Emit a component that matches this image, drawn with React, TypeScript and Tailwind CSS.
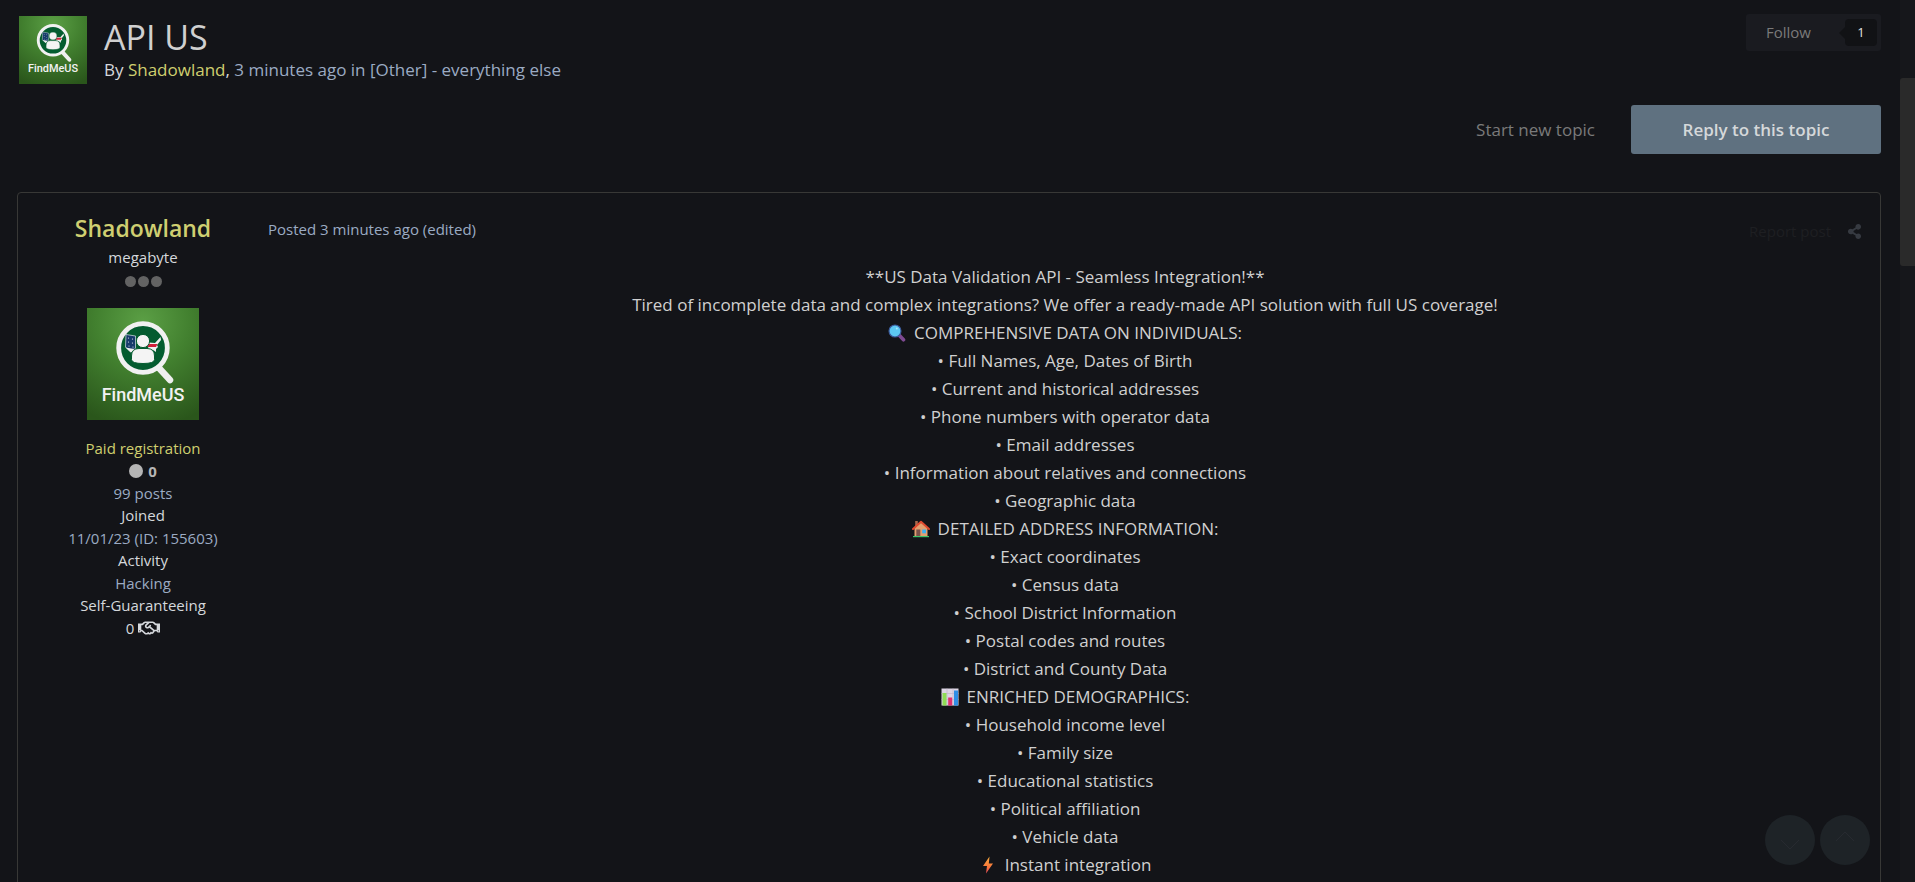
import { FaRegHandshake, FaShareAlt } from "react-icons/fa";

const fontStack = "font-['Open_Sans','Noto_Sans',sans-serif]";

function Avatar({ id, className }: { id: string; className: string }) {
  return (
    <svg viewBox="0 0 112 112" className={className} role="img" aria-label="FindMeUS">
      <defs>
        <radialGradient id={id} cx="0.5" cy="0.12" r="0.95">
          <stop offset="0" stopColor="#5b9f45" />
          <stop offset="0.45" stopColor="#42802f" />
          <stop offset="1" stopColor="#2a561b" />
        </radialGradient>
      </defs>
      <rect width="112" height="112" fill={`url(#${id})`} />
      <path d="M72 60 83 72" stroke="#efefef" strokeWidth="6.5" strokeLinecap="round" />
      <circle cx="56" cy="40" r="24.3" fill="#045c30" stroke="#f1f1f1" strokeWidth="4.8" />
      {/* US map halves */}
      <path d="M39 26.500 48.500 28V40.500L43.500 44 38.500 39Z" fill="#163a6b" stroke="#dfe6ea" strokeWidth="0.7" />
      <path d="M38.500 39.500 44 40.500 48 41 44 44.500Z" fill="#f1f1f1" />
      <g fill="#e6ecf3">
        <circle cx="41.500" cy="30" r="0.6" />
        <circle cx="45.500" cy="31" r="0.6" />
        <circle cx="41.500" cy="34" r="0.6" />
        <circle cx="45.500" cy="35" r="0.6" />
        <circle cx="42" cy="38" r="0.6" />
        <circle cx="46" cy="39" r="0.6" />
      </g>
      <path d="M62 34.500 68 35 73.500 29 74 32 70 37 71 39 69 41V44L66 42 61 41Z" fill="#f1f1f1" />
      <path d="M61.500 36H70.500L69 39H60.500Z" fill="#d0203a" />
      <circle cx="56" cy="33" r="6.600" fill="#f4f4f4" stroke="#045c30" strokeWidth="1" />
      <path
        d="M44.500 51.500V48Q44.500 40.500 52 40.500H60Q67.500 40.500 67.500 48V51.500Q67.500 55.500 56 55.500T44.500 51.500Z"
        fill="#f4f4f4"
        stroke="#045c30"
        strokeWidth="1"
      />
      <text x="56" y="93" textAnchor="middle" fontSize="18" fontWeight="500" fill="#f2f2f2" className="font-[Roboto,sans-serif]">
        FindMeUS
      </text>
    </svg>
  );
}

function MagnifierIcon() {
  return (
    <svg viewBox="0 0 18 18" className="size-[18px]" aria-hidden="true">
      <path d="M11 11 15.500 15.800" stroke="#7e4a92" strokeWidth="3.6" strokeLinecap="round" />
      <circle cx="7" cy="7" r="6" fill="#5cc8f2" stroke="#3d5a9c" strokeWidth="1.1" />
      <circle cx="8.800" cy="4.500" r="1" fill="#a8e6fb" />
    </svg>
  );
}

function HouseIcon() {
  return (
    <svg viewBox="0 0 18 18" className="size-[18px]" aria-hidden="true">
      <rect x="3.200" y="1" width="2.600" height="6" fill="#a8694c" />
      <path d="M2.500 8 9 2.500 15.500 8V16H2.500Z" fill="#e2a070" />
      <path d="M1 9 9 1.800 17 9" stroke="#e04a2f" strokeWidth="2" strokeLinecap="round" strokeLinejoin="round" fill="none" />
      <rect x="4.300" y="9.500" width="4" height="6.500" fill="#79504a" />
      <rect x="10.200" y="9.500" width="3.800" height="3.800" fill="#3fb0f0" />
      <rect x="1" y="16" width="16" height="1.200" fill="#3cc268" />
    </svg>
  );
}

function ChartIcon() {
  return (
    <svg viewBox="0 0 18 18" className="size-[18px]" aria-hidden="true">
      <rect x="0.500" y="0.500" width="17" height="17" fill="#ddd5e4" />
      <path d="M0.500 5.500H17.500M0.500 11.500H17.500M6 0.500V17.500M12 0.500V17.500" stroke="#bdb2c8" strokeWidth="0.6" />
      <rect x="1.500" y="5" width="4" height="12.500" fill="#8fdc55" />
      <rect x="7.200" y="9.500" width="4" height="8" fill="#e0306e" />
      <rect x="13" y="2.500" width="4" height="15" fill="#2f8ee5" />
    </svg>
  );
}

function BoltIcon() {
  return (
    <svg viewBox="0 0 18 18" className="size-[18px]" aria-hidden="true">
      <defs>
        <linearGradient id="bolt" x1="0" y1="0" x2="0" y2="1">
          <stop offset="0" stopColor="#fbb040" />
          <stop offset="0.6" stopColor="#f8763a" />
          <stop offset="1" stopColor="#ea4a5a" />
        </linearGradient>
      </defs>
      <path d="M10.500 0.500 4 10H8L7 17.500 14 7.500H9.800Z" fill="url(#bolt)" />
    </svg>
  );
}

const intro = [
  "**US Data Validation API - Seamless Integration!**",
  "Tired of incomplete data and complex integrations? We offer a ready-made API solution with full US coverage!",
];

const sections = [
  {
    icon: <MagnifierIcon />,
    title: "COMPREHENSIVE DATA ON INDIVIDUALS:",
    items: [
      "Full Names, Age, Dates of Birth",
      "Current and historical addresses",
      "Phone numbers with operator data",
      "Email addresses",
      "Information about relatives and connections",
      "Geographic data",
    ],
  },
  {
    icon: <HouseIcon />,
    title: "DETAILED ADDRESS INFORMATION:",
    items: [
      "Exact coordinates",
      "Census data",
      "School District Information",
      "Postal codes and routes",
      "District and County Data",
    ],
  },
  {
    icon: <ChartIcon />,
    title: "ENRICHED DEMOGRAPHICS:",
    items: [
      "Household income level",
      "Family size",
      "Educational statistics",
      "Political affiliation",
      "Vehicle data",
    ],
  },
  { icon: <BoltIcon />, title: "Instant integration", items: [] },
];

function TopicHeader() {
  return (
    <header className="flex items-start justify-between pt-[14px]">
      <div className="flex gap-[17px] pt-[2px] pl-[2px]">
        <a href="#profile" className="block">
          <Avatar id="avatar-small" className="size-[68px]" />
        </a>
        <div>
          <h1 className="text-[34px] leading-[42px] text-[#d0d0d0]">API US</h1>
          <p className="text-[17px] leading-[24px] text-[#9babc3]">
            <span className="text-[#d5d8dc]">By </span>
            <a href="#profile" className="text-[#cfcf6f]">Shadowland</a>
            <span className="text-[#d5d8dc]">, </span>
            3 minutes ago in{" "}
            <a href="#forum">[Other] - everything else</a>
          </p>
        </div>
      </div>
      <div className="flex h-[37px] items-center justify-between rounded-[3px] bg-[#1a1b20] pr-1 pl-5">
        <button type="button" className="pr-7 text-[15px] text-[#7a7a7a]">Follow</button>
        <div className="flex items-center">
          <span className="border-y-6 border-r-6 border-y-transparent border-r-[#111215]" />
          <a href="#followers" className="flex h-[27px] w-8 items-center justify-center rounded bg-[#111215] text-[13px] text-[#e2e2e2]">1</a>
        </div>
      </div>
    </header>
  );
}

function Author() {
  return (
    <aside className="w-[250px] shrink-0 pt-5 text-center text-[15px]">
      <h3 className="text-[23px] leading-[30px] font-semibold">
        <a href="#profile" className="text-[#cfcf71]">Shadowland</a>
      </h3>
      <p className="mt-[3px] leading-[22px] text-[#d5d8dc]">megabyte</p>
      <div className="mt-2 flex justify-center gap-[2px]">
        <span className="size-[11px] rounded-full bg-[#636363]" />
        <span className="size-[11px] rounded-full bg-[#636363]" />
        <span className="size-[11px] rounded-full bg-[#636363]" />
      </div>
      <a href="#profile" className="mt-[21px] mb-[17px] flex justify-center">
        <Avatar id="avatar-large" className="size-[112px]" />
      </a>
      <ul className="leading-[22px] text-[#9babc3]">
        <li className="text-[#cfcf6f]">Paid registration</li>
        <li className="flex h-[23px] items-center justify-center gap-[5px] font-bold text-[#b5b5b5]">
          <span className="size-[14px] rounded-full bg-[#b5b5b5]" />0
        </li>
        <li>99 posts</li>
        <li className="leading-[23px] text-[#d5d8dc]">Joined</li>
        <li>11/01/23 (ID: 155603)</li>
        <li className="leading-[23px] text-[#d5d8dc]">Activity</li>
        <li>Hacking</li>
        <li className="leading-[23px] text-[#d5d8dc]">Self-Guaranteeing</li>
        <li className="flex items-center justify-center gap-1 text-[#d5d8dc]">
          0 <FaRegHandshake className="size-[22px]" />
        </li>
      </ul>
    </aside>
  );
}

function PostBody() {
  return (
    <div className="mt-[18px] text-center text-[17px] leading-[28px] text-[#d0d0d0]">
      {intro.map((line) => (
        <p key={line}>{line}</p>
      ))}
      {sections.map((section) => (
        <section key={section.title}>
          <h4 className="flex items-center justify-center gap-2">
            {section.icon}
            {section.title}
          </h4>
          {section.items.map((item) => (
            <p key={item}>• {item}</p>
          ))}
        </section>
      ))}
    </div>
  );
}

export default function App() {
  return (
    <div className={`flex h-screen overflow-hidden bg-[#131418] ${fontStack}`}>
      <main className="min-w-0 flex-1 pr-[19px] pl-[17px]">
        <TopicHeader />

        {/* Topic actions */}
        <div className="mt-[21px] flex items-center justify-end gap-9">
          <a href="#new" className="text-[17px] text-[#7a7a7a]">Start new topic</a>
          <a
            href="#reply"
            className="flex h-[49px] w-[250px] items-center justify-center rounded-[3px] bg-[#5f7180] text-[17px] font-semibold text-[#d5d8da]"
          >
            Reply to this topic
          </a>
        </div>

        <article className="mt-[38px] flex rounded-[4px] border border-[#383836] pb-8">
          <Author />
          <div className="min-w-0 flex-1 pt-5 pr-[18px]">
            <div className="flex h-8 items-center justify-between text-[15px]">
              <span className="text-[#9babc3]">Posted 3 minutes ago (edited)</span>
              <div className="flex items-center gap-4 pt-1">
                <a href="#report" className="text-[#1e1f22]">Report post</a>
                <button type="button" aria-label="Share">
                  <FaShareAlt className="size-[15px] text-[#363a41]" />
                </button>
              </div>
            </div>
            <PostBody />
          </div>
        </article>
      </main>

      {/* Page scrollbar */}
      <div className="w-[15px] shrink-0 bg-[#16171b] pt-[78px]">
        <div className="h-[188px] rounded-l-[3px] bg-[#2a2a2a]" />
      </div>

      {/* Jump buttons */}
      <nav className="fixed right-[45px] bottom-[17px] flex gap-[5px]">
        <button type="button" aria-label="Scroll down" className="flex size-[50px] items-center justify-center rounded-full bg-[#1e2327]">
          <svg viewBox="0 0 20 20" className="size-5" fill="none" stroke="#272a30">
            <path d="M1 10 10 19 19 10" />
          </svg>
        </button>
        <button type="button" aria-label="Scroll up" className="flex size-[50px] items-center justify-center rounded-full bg-[#1e2327]">
          <svg viewBox="0 0 20 20" className="size-5" fill="none" stroke="#272a30">
            <path d="M1 11 10 2 19 11" />
          </svg>
        </button>
      </nav>
    </div>
  );
}
